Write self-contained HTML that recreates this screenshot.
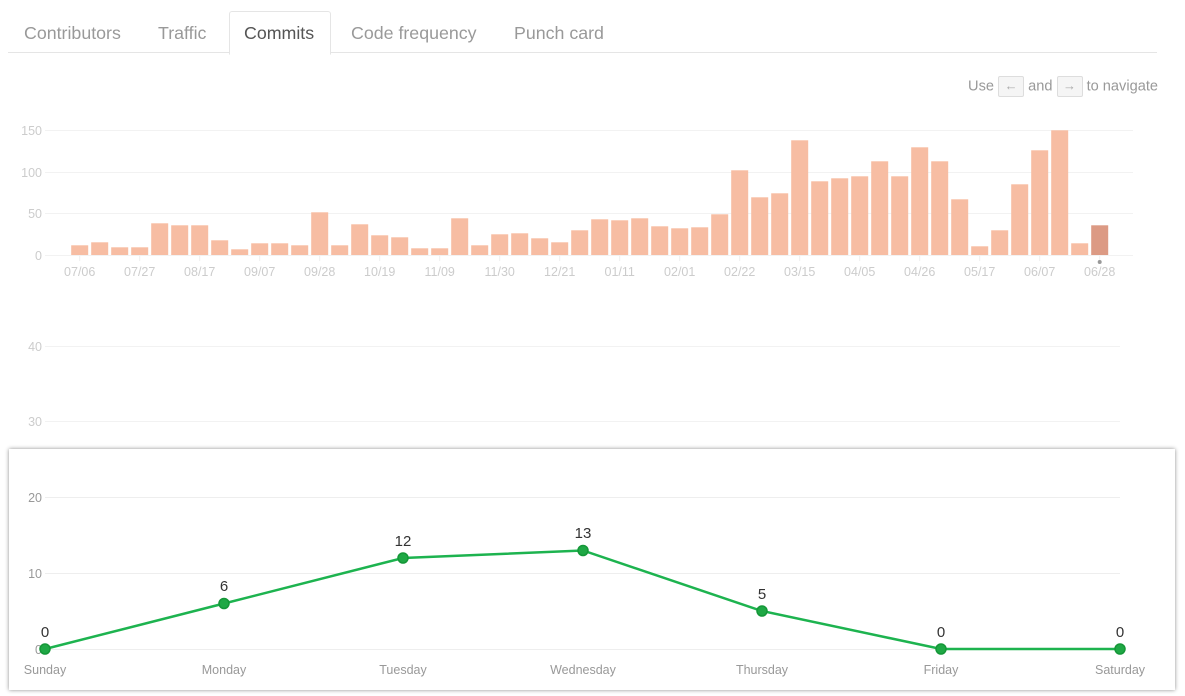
<!DOCTYPE html>
<html><head><meta charset="utf-8"><style>
body{margin:0;width:1185px;height:696px;background:#fff;font-family:"Liberation Sans",Helvetica,Arial,sans-serif;position:relative;overflow:hidden}
.tabs{position:absolute;left:8px;top:52px;width:1149px;border-top:1px solid #e5e5e5}
.tab{position:absolute;top:23px;font-size:17.8px;color:#999}
.act{position:absolute;left:229px;top:11px;width:100px;height:42px;border:1px solid #e5e5e5;border-bottom:1px solid #fff;border-radius:3px 3px 0 0;background:#fff}
.nav{position:absolute;right:27px;top:76px;font-size:14.6px;color:#999}
.k{display:inline-block;width:24px;height:19px;border:1px solid #ddd;background:#f5f5f5;border-radius:2px;text-align:center;line-height:18px;font-size:13px;vertical-align:middle;color:#aaa}
.box{position:absolute;left:9px;top:449px;width:1166px;height:241px;background:#fff;box-shadow:0 0 4px rgba(0,0,0,.45)}
svg{position:absolute;left:0;top:0}
</style></head><body>
<div class="tabs"></div>
<div class="act"></div>
<div class="tab" style="left:24px">Contributors</div>
<div class="tab" style="left:158px">Traffic</div>
<div class="tab" style="left:244px;color:#555">Commits</div>
<div class="tab" style="left:351px">Code frequency</div>
<div class="tab" style="left:514px">Punch card</div>
<div class="nav">Use <span class="k">←</span> and <span class="k">→</span> to navigate</div>
<svg width="1185" height="696" id="top" font-family="Liberation Sans, sans-serif">
<g stroke="#f2f2f2"><line x1="45" x2="1133" y1="130.5" y2="130.5"/><line x1="45" x2="1133" y1="172.5" y2="172.5"/><line x1="45" x2="1133" y1="213.5" y2="213.5"/><line x1="45" x2="1133" y1="255.5" y2="255.5"/></g>
<g fill="#ccc" font-size="12.5" text-anchor="end"><text x="42" y="135">150</text><text x="42" y="177">100</text><text x="42" y="218">50</text><text x="42" y="260">0</text></g>
<g id="bars"></g>
<g stroke="#f2f2f2"><line x1="45" x2="1120" y1="346.5" y2="346.5"/><line x1="45" x2="1120" y1="421.5" y2="421.5"/></g>
<g fill="#ccc" font-size="12.5" text-anchor="end"><text x="42" y="351">40</text><text x="42" y="426">30</text></g>
</svg>
<div class="box"></div>
<svg width="1185" height="696" font-family="Liberation Sans, sans-serif">
<g stroke="#eee"><line x1="45" x2="1120" y1="497.5" y2="497.5"/><line x1="45" x2="1120" y1="573.5" y2="573.5"/><line x1="45" x2="1120" y1="649.5" y2="649.5"/></g>
<g fill="#999" font-size="12.5" text-anchor="end"><text x="42" y="502">20</text><text x="42" y="578">10</text><text x="42" y="654">0</text></g>
<polyline fill="none" stroke="#1db34f" stroke-width="2.5" points="45,649 224,603.5 403,558 583,550.5 762,611 941,649 1120,649"/>
<g fill="#1fa845" stroke="#159738" stroke-width="1.5">
<circle cx="45" cy="649" r="5"/><circle cx="224" cy="603.5" r="5"/><circle cx="403" cy="558" r="5"/><circle cx="583" cy="550.5" r="5"/><circle cx="762" cy="611" r="5"/><circle cx="941" cy="649" r="5"/><circle cx="1120" cy="649" r="5"/></g>
<g fill="#333" font-size="15" text-anchor="middle"><text x="45" y="637">0</text><text x="224" y="591">6</text><text x="403" y="546">12</text><text x="583" y="538">13</text><text x="762" y="599">5</text><text x="941" y="637">0</text><text x="1120" y="637">0</text></g>
<g fill="#999" font-size="12.5" text-anchor="middle"><text x="45" y="674">Sunday</text><text x="224" y="674">Monday</text><text x="403" y="674">Tuesday</text><text x="583" y="674">Wednesday</text><text x="762" y="674">Thursday</text><text x="941" y="674">Friday</text><text x="1120" y="674">Saturday</text></g>
</svg>
<script>
var h=[9.7,12.7,7.7,7.7,31.7,29.7,29.7,14.7,5.7,11.7,11.7,9.7,42.7,9.7,30.7,19.7,17.7,6.7,6.7,36.7,9.7,20.7,21.7,16.7,12.7,24.7,35.7,34.7,36.7,28.7,26.7,27.7,40.7,84.7,57.7,61.7,114.7,73.7,76.7,78.7,93.7,78.7,107.7,93.7,55.7,8.7,24.7,70.7,104.7,124.7,11.7,29.7];
var labs=["07/06","07/27","08/17","09/07","09/28","10/19","11/09","11/30","12/21","01/11","02/01","02/22","03/15","04/05","04/26","05/17","06/07","06/28"];
var s="";
for(var i=0;i<52;i++){var x=71.2+i*20;s+='<rect x="'+x+'" y="'+(255-h[i])+'" width="17" height="'+h[i]+'" fill="'+(i==51?'#dc9a84':'#f7bda3')+'"/>';
if(i%3==0){var c=x+8.5;s+='<line x1="'+c+'" x2="'+c+'" y1="256" y2="261" stroke="#eee"/><text x="'+c+'" y="276" fill="#ccc" font-size="12.5" text-anchor="middle">'+labs[i/3]+'</text>';}}
s+='<circle cx="1099.7" cy="262" r="2" fill="#999"/>';
document.getElementById("bars").innerHTML=s;
</script>
</body></html>
